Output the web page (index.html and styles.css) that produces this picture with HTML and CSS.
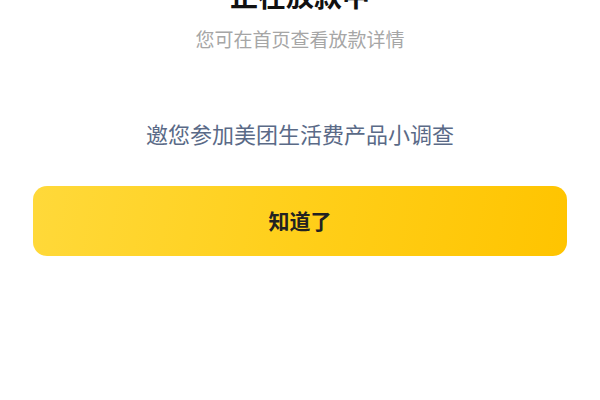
FILE: index.html
```html
<!DOCTYPE html>
<html lang="zh-CN">
<head>
    <meta charset="UTF-8">
    <meta name="viewport" content="width=device-width, initial-scale=1.0">
    <title>正在放款中</title>
    <link rel="stylesheet" href="styles.css">
</head>
<body>

    <!-- Result panel -->
    <div class="result">
        <h1 class="result-title">正在放款中</h1>
        <p class="result-desc">您可在首页查看放款详情</p>

        <a class="survey-link" href="#">邀您参加美团生活费产品小调查</a>

        <button type="button" class="btn-ok">知道了</button>
    </div>

</body>
</html>
```

FILE: styles.css
```css
* {
    margin: 0;
    padding: 0;
    box-sizing: border-box;
}

body {
    font-family: "Noto Sans CJK SC", "Noto Sans", sans-serif;
    background-color: #fff;
    height: 100vh;
    overflow: hidden;
}

.result {
    display: flex;
    flex-direction: column;
    align-items: center;
    padding: 0 33px;
}

.result-title {
    margin-top: -19px;
    font-size: 28px;
    line-height: 28px;
    font-weight: bold;
    color: #111;
}

.result-desc {
    margin-top: 20px;
    font-size: 19px;
    line-height: 19px;
    color: #a6a6a6;
}

.survey-link {
    margin-top: 74px;
    font-size: 22px;
    line-height: 22px;
    color: #5a6a87;
    text-decoration: none;
}

.btn-ok {
    margin-top: 42px;
    width: 100%;
    height: 70px;
    padding-bottom: 2px;
    border: none;
    border-radius: 14px;
    background: linear-gradient(100deg, #ffd93a 0%, #ffcf1a 50%, #ffc400 100%);
    font-family: inherit;
    font-size: 21px;
    font-weight: bold;
    color: #222;
    cursor: pointer;
}
```
